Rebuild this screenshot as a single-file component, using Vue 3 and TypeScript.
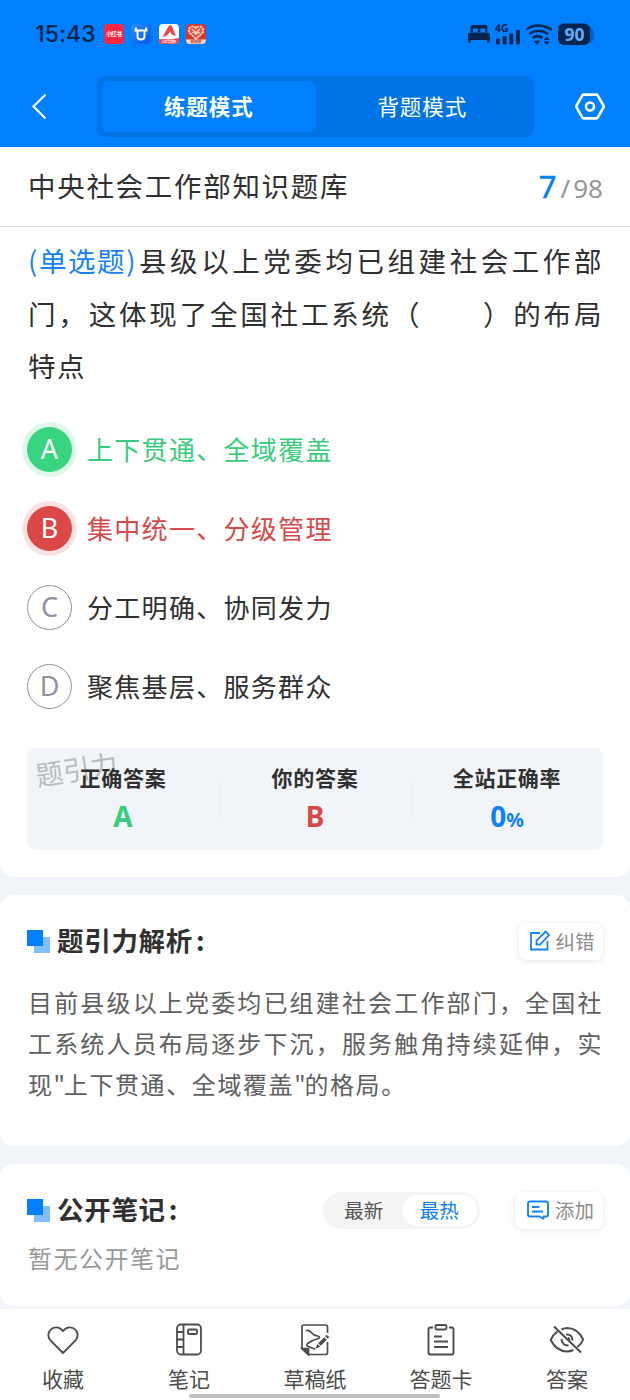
<script setup lang="ts">
import { ref } from 'vue'

interface Option {
  key: string
  text: string
  state: 'right' | 'wrong' | 'plain'
}

const mode = ref<'practice' | 'recite'>('practice')
const sort = ref<'new' | 'hot'>('hot')

const options: Option[] = [
  { key: 'A', text: '上下贯通、全域覆盖', state: 'right' },
  { key: 'B', text: '集中统一、分级管理', state: 'wrong' },
  { key: 'C', text: '分工明确、协同发力', state: 'plain' },
  { key: 'D', text: '聚焦基层、服务群众', state: 'plain' },
]
</script>

<template>
  <div class="page">
    <header class="top">
      <div class="status">
        <span class="time">15:43</span>
        <div class="apps">
          <svg width="20" height="20" viewBox="0 0 20 20">
            <rect width="20" height="20" rx="4" fill="#fb2742" />
            <text x="10" y="12.4" class="tiny" font-size="5.8" fill="#fff" text-anchor="middle" textLength="16">小红书</text>
          </svg>
          <svg width="20" height="20" viewBox="0 0 20 20">
            <defs>
              <linearGradient id="ug" x1="0" y1="0" x2="1" y2="1">
                <stop offset="0" stop-color="#2c8cf6" />
                <stop offset="1" stop-color="#0758ee" />
              </linearGradient>
            </defs>
            <rect width="20" height="20" rx="4" fill="url(#ug)" />
            <path d="M3.500 6.500h3v6q0 3 3.500 3t3.500-3v-6h3M7 6.500h6M5.500 6.500 4.500 3.500M14.500 6.500l1-3" fill="none" stroke="#fff" stroke-width="2" />
          </svg>
          <svg width="20" height="20" viewBox="0 0 20 20">
            <rect width="20" height="20" rx="4" fill="#fff" />
            <path d="M0 15q10 1 20-1v2a4 4 0 0 1-4 4H4a4 4 0 0 1-4-4z" fill="#f33e4d" />
            <path d="M3.500 13 10 1.500h2.500L17 12l-4.500-1.500L11 7q-1.500 5-7.500 6z" fill="#f1404f" />
            <text x="10" y="18.600" class="tiny" font-size="3" fill="#fff" text-anchor="middle" textLength="14">公务员题库</text>
          </svg>
          <svg width="20" height="20" viewBox="0 0 20 20">
            <rect width="20" height="20" rx="4" fill="#d9342d" />
            <path d="M10 15 3.500 9a4 4 0 0 1 6.500-5 4 4 0 0 1 6.500 5z" fill="#e5554a" stroke="#f8d3bd" stroke-width="1.800" stroke-dasharray="2.500 .7" />
            <path d="M6 5l3 3M14 5l-3 3M6 9l3-1M14 9l-3-1" stroke="#f8d3bd" stroke-width="1.200" />
            <circle cx="10" cy="9" r="1.800" fill="#f8d3bd" />
            <path d="M0 15.500h20a4 4 0 0 1-4 4.500H4a4 4 0 0 1-4-4.500z" fill="#fbdccb" />
            <text x="10" y="19" class="tiny" font-size="3.600" fill="#c5352c" text-anchor="middle">题题题</text>
          </svg>
        </div>
        <svg class="system" width="130" height="26" viewBox="0 0 130 26">
          <g fill="#06264f">
            <path d="M2.500 11V6.500Q2.500 4 5 4h12q2.500 0 2.500 2.500V11h-2.300V7.500h-4.900V11h-2.500V7.500H5V11z" />
            <path d="M0 14q0-2.500 2-2.500h18q2 0 2 2.500v7.500h-2.700V19H2.700v2.500H0z" />
            <rect x="28" y="17.500" width="3.800" height="6" rx="1" />
            <rect x="34.700" y="15" width="3.800" height="8.500" rx="1" />
            <rect x="41.400" y="12.500" width="3.800" height="11" rx="1" />
            <rect x="48.100" y="9" width="3.800" height="14.500" rx="1" />
            <path d="M66 20.200q3-1.500 6 0l-3 3.700z" />
            <path d="M78.700 15.500l3 3.500h-6zM78.700 24l3-3.500h-6z" />
            <path d="M118 4q8 1 8 10.500T118 22z" fill="#0460be" />
            <rect x="90" y="2.500" width="32" height="21.500" rx="6" />
          </g>
          <g fill="none" stroke="#06264f" stroke-width="2.600">
            <path d="M58.500 8.500q11-8 25 0" />
            <path d="M61.500 13q8.500-6.500 18.500 0" />
            <path d="M64.500 17q5-3.800 10 0" />
          </g>
          <text x="27" y="11" class="num" font-size="10.500" font-weight="700" fill="#06264f">4G</text>
          <text x="106.500" y="20" class="num" font-size="17.500" font-weight="700" fill="#66abf7" text-anchor="middle">90</text>
        </svg>
      </div>
      <nav class="nav">
        <svg class="back" width="20" height="30" viewBox="0 0 20 30">
          <path d="M15.500 2.500 3.500 14.500l12 12" fill="none" stroke="#fff" stroke-width="2.200" />
        </svg>
        <div class="modes">
          <button :class="['mode', { active: mode === 'practice' }]" @click="mode = 'practice'">练题模式</button>
          <button :class="['mode', { active: mode === 'recite' }]" @click="mode = 'recite'">背题模式</button>
        </div>
        <svg class="gear" width="32" height="30" viewBox="0 0 32 30">
          <path d="M9.600 2.600h12.800q.8 0 1.200.7l5.900 10.200q.5 1 0 2l-5.900 10.200q-.4.700-1.200.7H9.600q-.8 0-1.200-.7L2.500 15.500q-.5-1 0-2L8.400 3.300q.4-.7 1.200-.7z" fill="none" stroke="#fff" stroke-width="2.600" />
          <circle cx="16" cy="14.500" r="4" fill="none" stroke="#fff" stroke-width="2.500" />
        </svg>
      </nav>
    </header>

    <section class="card first">
      <div class="bank">
        <span class="bank-name">中央社会工作部知识题库</span>
        <span class="progress"><b>7</b><i>/</i>98</span>
      </div>
      <div class="question">
        <div class="line"><span class="kind">(单选题)</span><span class="stretch">县级以上党委均已组建社会工作部</span></div>
        <div class="line"><span class="stretch">门，这体现了全国社工系统（&#12288;&#12288;）的布局</span></div>
        <div class="line">特点</div>
      </div>
      <ul class="options">
        <li v-for="o in options" :key="o.key" :class="['option', o.state]">
          <span class="badge">{{ o.key }}</span>
          <span class="option-text">{{ o.text }}</span>
        </li>
      </ul>
      <div class="result">
        <span class="watermark">题引力</span>
        <div class="cell"><span class="label">正确答案</span><span class="value green">A</span></div>
        <div class="cell"><span class="label">你的答案</span><span class="value red">B</span></div>
        <div class="cell"><span class="label">全站正确率</span><span class="value blue">0<small>%</small></span></div>
      </div>
    </section>

    <section class="card analysis">
      <div class="heading">
        <span class="mark"></span>
        <h2>题引力解析<span class="colon">:</span></h2>
        <button class="action">
          <svg width="22" height="22" viewBox="0 0 22 22" fill="none" stroke="#1684f7" stroke-width="1.800">
            <path d="M11 3H2v16.500h16.500V11" />
            <path d="M7.500 14.500v-4L16.500 1.500l3.500 3.500-9 9.500z" />
          </svg>
          <span>纠错</span>
        </button>
      </div>
      <div class="explain">
        <p class="stretch">目前县级以上党委均已组建社会工作部门，全国社</p>
        <p class="stretch">工系统人员布局逐步下沉，服务触角持续延伸，实</p>
        <p>现<span class="quote">"</span>上下贯通、全域覆盖<span class="quote">"</span>的格局。</p>
      </div>
    </section>

    <section class="card notes">
      <div class="heading">
        <span class="mark"></span>
        <h2>公开笔记<span class="colon">:</span></h2>
        <div class="sort">
          <button :class="{ on: sort === 'new' }" @click="sort = 'new'">最新</button>
          <button :class="{ on: sort === 'hot' }" @click="sort = 'hot'">最热</button>
        </div>
        <button class="action add">
          <svg width="22" height="22" viewBox="0 0 22 22" fill="none" stroke="#1684f7" stroke-width="1.900">
            <path d="M12.500 17.500H3q-2 0-2-2v-11q0-2 2-2h16q2 0 2 2v11q0 2-2 2h-2.500v2.300z" stroke-linejoin="round" />
            <path d="M5 8h7.500M5 12.500h11" />
          </svg>
          <span>添加</span>
        </button>
      </div>
      <p class="empty">暂无公开笔记</p>
    </section>

    <footer class="tools">
      <div class="tool">
        <svg width="36" height="36" viewBox="0 0 36 36" fill="none" stroke="#4c4c4c" stroke-width="1.800">
          <path d="M18 31 5.200 18.200A7.800 7.800 0 0 1 16.300 7.300L18 9l1.700-1.700a7.800 7.800 0 0 1 11.100 10.900z" stroke-linejoin="round" />
        </svg>
        <span>收藏</span>
      </div>
      <div class="tool">
        <svg width="36" height="36" viewBox="0 0 36 36" fill="none" stroke="#4c4c4c" stroke-width="1.800">
          <rect x="6" y="2.500" width="24" height="30" rx="4" />
          <path d="M12.500 2.500v30M6 10h6.500M6 17.500h6.500M6 25h6.500" />
          <rect x="17" y="7.500" width="9" height="4.500" rx="1" />
        </svg>
        <span>笔记</span>
      </div>
      <div class="tool">
        <svg width="36" height="36" viewBox="0 0 36 36" fill="none" stroke="#4c4c4c" stroke-width="1.700">
          <path d="M30.500 11V5q0-2-2-2H7Q5 3 5 5v21.500l6 6h17.500q2 0 2-2V20" />
          <path d="M5 26.500h6.500v6z" fill="#4c4c4c" />
          <path d="M9.500 8.500C15 7.500 13 13 20.500 14c3 .5 2.500 2 .5 2.500-5 1.500-8 3-10.500 5-1.500 1.500-.5 2.500 1 3l6 2.500" stroke-linecap="round" />
          <path d="M22.500 22.500l6-6" stroke-width="3.800" />
          <path d="M29.500 15.500l1.500-1.500" stroke-width="3.800" />
          <path d="M20 25.200l.8-1.800 1 1z" fill="#4c4c4c" />
        </svg>
        <span>草稿纸</span>
      </div>
      <div class="tool">
        <svg width="36" height="36" viewBox="0 0 36 36" fill="none" stroke="#4c4c4c" stroke-width="1.900">
          <path d="M10 5.500H7.500q-2 0-2 2v23q0 2 2 2h21q2 0 2-2v-23q0-2-2-2H26" />
          <rect x="12.500" y="3" width="11" height="4.500" rx="1.500" />
          <path d="M11 14.500h8M11 19.500h14M11 25h14" />
        </svg>
        <span>答题卡</span>
      </div>
      <div class="tool">
        <svg width="36" height="36" viewBox="0 0 36 36" fill="none" stroke="#4c4c4c" stroke-width="2">
          <path d="M12.500 7.500q3-1.500 6-1.500Q29 6.500 34.200 17.500q-1.800 4.500-5.700 7.500M24.500 28Q21 29.500 18 29.500 7 29 1.800 18 4 12.500 8.500 9.500" />
          <path d="M17 12.500q6.500-.5 6.500 6M19.500 23.500q-6.500 0-7-6.500M19 16q1.500.5 1.500 2" />
          <path d="M5 4.500l27 26" />
        </svg>
        <span>答案</span>
      </div>
      <div class="home-bar"></div>
    </footer>
  </div>
</template>

<style>
body {
  margin: 0;
  background: #f1f5f9;
}
</style>

<style scoped>
.page {
  width: 630px;
  height: 1400px;
  overflow: hidden;
  position: relative;
  display: flex;
  flex-direction: column;
  background: #f1f5f9;
  color: #303030;
  font-family: "Noto Sans CJK SC", sans-serif;
  white-space: nowrap;
}
svg { display: block; flex: none; }
button {
  font: inherit;
  color: inherit;
  border: 0;
  padding: 0;
  margin: 0;
  background: none;
}
h2, p, ul { margin: 0; padding: 0; }
.tiny { font-weight: 700; }
.num { font-family: "Noto Sans", sans-serif; }

.top {
  height: 147px;
  background: #0080ff;
  flex: none;
}
.status {
  height: 76px;
  box-sizing: border-box;
  padding: 20px 35px 28px;
  display: flex;
  align-items: center;
}
.time {
  width: 69px;
  font-family: Inter, sans-serif;
  font-size: 23.500px;
  font-weight: 500;
  line-height: 28px;
  letter-spacing: -0.200px;
  color: #06264f;
}
.apps { display: flex; gap: 7.300px; }
.system { margin-left: auto; margin-right: -3px; }
.nav {
  height: 61px;
  padding: 0 24px 0 30px;
  display: flex;
  align-items: center;
}
.modes {
  width: 437px;
  height: 61px;
  box-sizing: border-box;
  margin-left: 47px;
  padding: 5px 5px 5px 5px;
  display: flex;
  border-radius: 8px;
  background: #0074e7;
}
.mode {
  flex: 1;
  padding-bottom: 2px;
  border-radius: 7px;
  color: #fff;
  font-size: 21.500px;
  letter-spacing: 0.900px;
}
.mode.active { background: #0080ff; font-weight: 700; }
.gear { margin-left: auto; margin-right: 0; }

.card {
  background: #fff;
  border-radius: 14px;
  box-sizing: border-box;
  padding: 0 27px;
  flex: none;
}
.first {
  height: 730px;
  border-radius: 0 0 14px 14px;
}
.bank {
  height: 79px;
  margin: 0 -27px;
  padding: 0 27px 0 28px;
  display: flex;
  align-items: center;
  justify-content: space-between;
  border-bottom: 1px solid #dcdfe1;
}
.bank-name { margin-top: -3px; font-size: 27.500px; letter-spacing: 1.700px; line-height: 76px; }
.progress {
  display: flex;
  align-items: baseline;
  margin-top: -2px;
  font-family: "Noto Sans", sans-serif;
  font-size: 26px;
  color: #969696;
}
.progress b { font-size: 31px; font-weight: 400; color: #0080ff; -webkit-text-stroke: 0.500px #0080ff; }
.progress i { font-style: normal; padding: 0 3px 0 4px; }
.question {
  padding: 7px 0 0 1px;
  font-size: 27.500px;
  letter-spacing: 1.600px;
}
.line { display: flex; height: 52.500px; line-height: 52.500px; }
.kind { color: #1684f7; width: 111px; }
.stretch {
  flex: 1;
  text-align: justify;
  text-align-last: justify;
  white-space: normal;
}
.options { list-style: none; padding-top: 18.500px; }
.option { display: flex; align-items: center; height: 79px; gap: 15px; }
.badge {
  width: 45px;
  height: 45px;
  box-sizing: border-box;
  border: 1px solid #8f919f;
  border-radius: 50%;
  font-family: "Noto Sans", sans-serif;
  font-size: 27px;
  line-height: 42px;
  text-align: center;
  color: #8f919f;
}
.option-text { margin-top: -2px; font-size: 26px; letter-spacing: 1.300px; line-height: 40px; }
.right .badge { color: #fff; border-color: #38d480; background: #38d480; box-shadow: 0 0 0 5px #def8e9; }
.wrong .badge { color: #fff; border-color: #dc4747; background: #dc4747; box-shadow: 0 0 0 5px #fae2e2; }
.right .option-text { color: #38cc7d; }
.wrong .option-text { color: #d44b49; }
.result {
  position: relative;
  height: 102px;
  margin-top: 21.500px;
  border-radius: 8px;
  background: #f1f5f9;
  display: flex;
}
.watermark {
  position: absolute;
  left: 8px;
  top: 0;
  font-size: 27.500px;
  line-height: 40px;
  color: #b9bcbf;
  transform: rotate(-9deg);
}
.cell {
  position: relative;
  flex: 1;
  display: flex;
  flex-direction: column;
  align-items: center;
  padding-top: 14px;
}
.cell + .cell::before {
  content: "";
  position: absolute;
  left: 0;
  top: 34px;
  width: 1px;
  height: 36px;
  background: #e9edf1;
}
.label { font-size: 21px; font-weight: 700; line-height: 31px; letter-spacing: 0.700px; }
.value {
  margin-top: 1px;
  font-family: "Noto Sans", sans-serif;
  font-size: 28px;
  font-weight: 700;
  line-height: 44px;
}
.value small { font-size: 19.500px; }
.green { color: #38cc7d; }
.red { color: #d84848; }
.blue { color: #0d80f5; }

.analysis { height: 251px; margin-top: 18px; padding-top: 26px; }
.heading { display: flex; align-items: center; height: 40px; }
.mark {
  position: relative;
  width: 16px;
  height: 16px;
  margin: -7px 14px 0 0;
  background: #0080ff;
  box-shadow: 7px 7px 0 #80bfff;
}
.mark::after {
  content: "";
  position: absolute;
  inset: 0;
  background: #0080ff;
}
h2 { margin-top: -2px; font-size: 26.500px; line-height: 40px; font-weight: 700; letter-spacing: 0.700px; }
.colon { padding-left: 3px; }
.action {
  width: 84px;
  height: 37px;
  box-sizing: border-box;
  margin-left: auto;
  padding-left: 2px;
  display: flex;
  align-items: center;
  justify-content: center;
  gap: 4px;
  border-radius: 8px;
  box-shadow: 0 1px 6px rgba(0, 0, 0, 0.1);
  font-size: 19.500px;
  color: #8c8c8c;
}
.action span { line-height: 34px; margin-top: -1px; }
.explain {
  padding: 20px 0 0 1px;
  font-size: 24px;
  line-height: 41px;
  letter-spacing: 1.600px;
  color: #5f5f5f;
}
.quote { letter-spacing: -1.200px; }

.notes { height: 142px; margin-top: 18px; padding-top: 26px; }
.sort {
  width: 157px;
  height: 37px;
  box-sizing: border-box;
  margin-left: auto;
  padding: 3px;
  display: flex;
  border-radius: 19px;
  background: #f4f4f4;
  font-size: 19.500px;
  color: #555;
}
.sort button { flex: 1; line-height: 30px; border-radius: 16px; }
.sort .on { color: #0d80f5; background: #fff; }
.add { width: 88px; margin-left: 35px; padding-left: 3px; gap: 6px; }
.empty {
  padding: 8px 0 0 1px;
  font-size: 24px;
  line-height: 40px;
  letter-spacing: 1.500px;
  color: #999;
}

.tools {
  position: relative;
  height: 91px;
  margin-top: 3px;
  display: flex;
  background: #fff;
}
.tool {
  flex: 1;
  display: flex;
  flex-direction: column;
  align-items: center;
  padding-top: 13px;
}
.tool span {
  margin-top: 5px;
  font-size: 21px;
  line-height: 30px;
  color: #4b4b4b;
}
.home-bar {
  position: absolute;
  left: 189px;
  bottom: 2px;
  width: 251px;
  height: 4px;
  border-radius: 2px;
  background: #bfbfbf;
}
</style>
